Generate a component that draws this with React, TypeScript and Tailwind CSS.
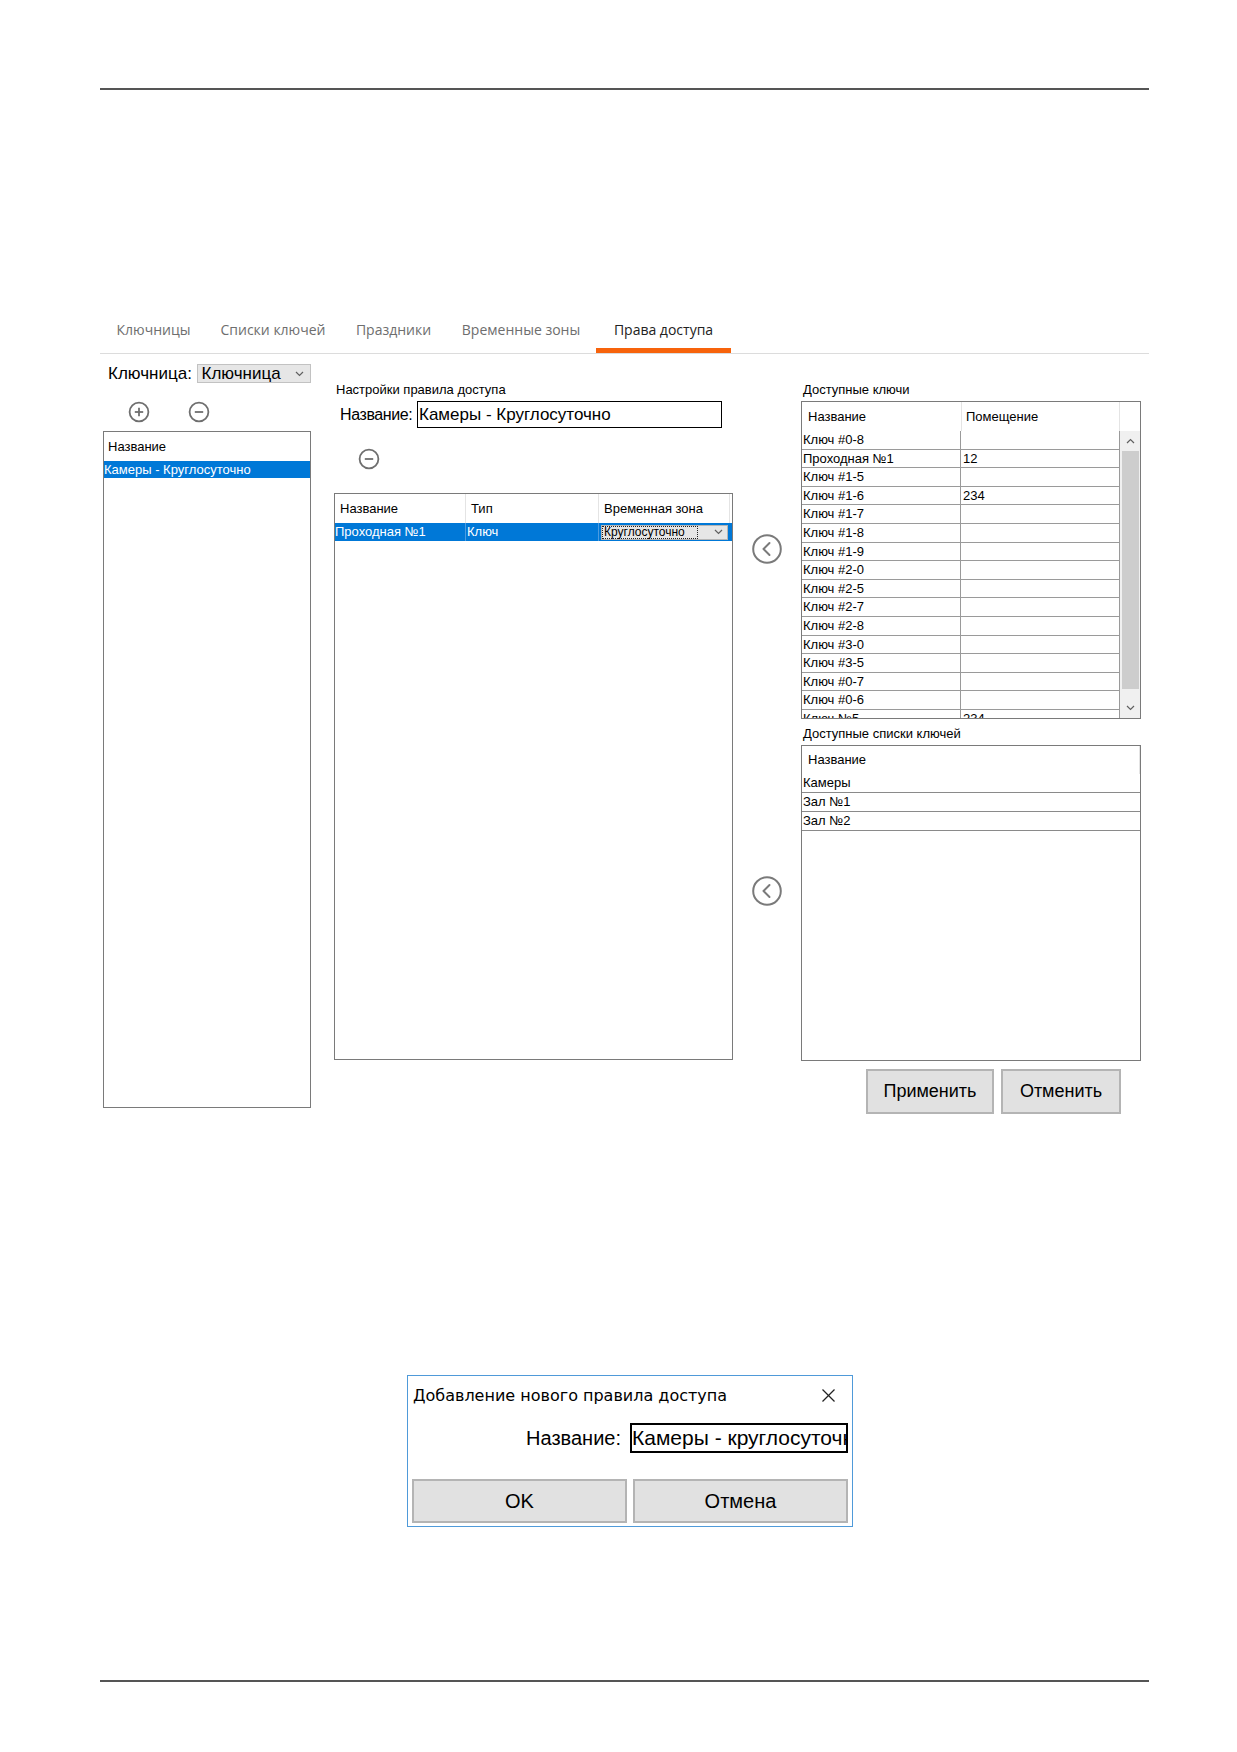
import React from "react";

const tabs = [
	{ label: "Ключницы", w: "w-[103px]" },
	{ label: "Списки ключей", w: "w-[136px]" },
	{ label: "Праздники", w: "w-[105px]" },
	{ label: "Временные зоны", w: "w-[150px]" },
	{ label: "Права доступа", w: "w-[135px]", active: true },
];

const keys: [string, string][] = [
	["Ключ #0-8", ""],
	["Проходная №1", "12"],
	["Ключ #1-5", ""],
	["Ключ #1-6", "234"],
	["Ключ #1-7", ""],
	["Ключ #1-8", ""],
	["Ключ #1-9", ""],
	["Ключ #2-0", ""],
	["Ключ #2-5", ""],
	["Ключ #2-7", ""],
	["Ключ #2-8", ""],
	["Ключ #3-0", ""],
	["Ключ #3-5", ""],
	["Ключ #0-7", ""],
	["Ключ #0-6", ""],
	["Ключ №5", "234"],
];

const keyLists = ["Камеры", "Зал №1", "Зал №2"];

function RoundIcon({ plus }: { plus?: boolean }) {
	return (
		<svg width="22" height="22" viewBox="0 0 22 22" fill="none" stroke="#6f6f6f" strokeWidth="1.8">
			<circle cx="11" cy="11" r="9.4" />
			<line x1="6.8" y1="11" x2="15.2" y2="11" />
			{plus && <line x1="11" y1="6.8" x2="11" y2="15.2" />}
		</svg>
	);
}

function BackButton() {
	return (
		<svg width="30" height="30" viewBox="0 0 30 30" fill="none" stroke="#7a7a7a" strokeWidth="2">
			<circle cx="15" cy="15" r="13.8" />
			<polyline points="17.5,9 11.5,15 17.5,21" strokeLinecap="round" strokeLinejoin="round" />
		</svg>
	);
}

function SmallChevron({ up }: { up?: boolean }) {
	return (
		<svg width="9" height="6" viewBox="0 0 9 6" fill="none" stroke="#606060" strokeWidth="1.2">
			<polyline points={up ? "1,5 4.5,1.5 8,5" : "1,1 4.5,4.5 8,1"} />
		</svg>
	);
}

function KeysTable() {
	return (
		<div className="flex h-[318px] w-[340px] flex-col border border-[#7a7a7a]">
			<div className="flex h-[29px] shrink-0 items-center text-[13px]">
				<div className="flex h-full w-[160px] items-center border-r border-[#e4e4e4] pl-[6px]">Название</div>
				<div className="flex h-full w-[158px] items-center border-r border-[#e4e4e4] pl-[4px]">Помещение</div>
			</div>
			<div className="flex min-h-0 flex-1">
				<div className="min-h-0 w-[318px] overflow-hidden">
					{keys.map(([name, room]) => (
						<div key={name} className="flex h-[18.6px] border-b border-[#9a9a9a] text-[13px] leading-[17px]">
							<div className="w-[159px] shrink-0 border-r border-[#9a9a9a] pl-[1px]">{name}</div>
							<div className="w-[159px] shrink-0 border-r border-[#9a9a9a] pl-[2px]">{room}</div>
						</div>
					))}
				</div>
				<div className="flex w-[20px] flex-col bg-[#f0f0f0]">
					<div className="flex h-[20px] items-center justify-center">
						<SmallChevron up />
					</div>
					<div className="ml-[2px] h-[238px] w-[17px] bg-[#cdcdcd]" />
					<div className="flex flex-1 items-end justify-center pb-[7px]">
						<SmallChevron />
					</div>
				</div>
			</div>
		</div>
	);
}

export default function App() {
	return (
		<div className="relative h-[1752px] w-[1237px] bg-white font-['Liberation_Sans',Arial,sans-serif] text-black">
			<div className="ml-[100px] w-[1049px] pt-[88px]">
				<div className="h-[2px] bg-[#555]" />

				{/* tab strip */}
				<div className="mt-[220px] flex border-b border-[#dcdcdc] pl-[2px]">
					{tabs.map((t) => (
						<div
							key={t.label}
							className={`flex h-[43px] items-center justify-center border-b-[5px] font-['Open_Sans',sans-serif] text-[14px] ${t.w} ${
								t.active ? "border-[#f7630c] text-[#222]" : "border-transparent text-[#6e6e6e]"
							}`}
						>
							{t.label}
						</div>
					))}
				</div>

				<div className="flex items-start">
					{/* key cabinets */}
					<div className="w-[211px]">
						<div className="mt-[10px] flex h-[19px] items-center">
							<div className="w-[97px] pl-[8px] text-[17px] leading-none">Ключница:</div>
							<div className="flex h-[19px] w-[115px] items-center justify-between border border-[#c2c2c2] bg-[#e6e6e6] pl-[4px] pr-[6px] text-[17px] leading-none">
								<span>Ключница</span>
								<SmallChevron />
							</div>
						</div>
						<div className="mt-[18px] flex h-[22px] pl-[28px]">
							<RoundIcon plus />
							<div className="ml-[38px]">
								<RoundIcon />
							</div>
						</div>
						<div className="ml-[3px] mt-[8px] h-[677px] w-[208px] border border-[#7a7a7a] text-[13px]">
							<div className="flex h-[29px] items-center pl-[4px]">Название</div>
							<div className="flex h-[17px] items-center bg-[#0078d7] text-white">Камеры - Круглосуточно</div>
						</div>
					</div>

					{/* rule settings */}
					<div className="ml-[23px] w-[399px]">
						<div className="mt-[28px] pl-[2px] text-[13px] leading-[16px]">Настройки правила доступа</div>
						<div className="mt-[3px] flex h-[27px] items-center">
							<div className="w-[83px] pl-[6px] text-[16px] tracking-[-0.4px]">Название:</div>
							<div className="flex h-[27px] w-[305px] items-center border border-black pl-[1px] text-[17px]">
								Камеры - Круглосуточно
							</div>
						</div>
						<div className="mt-[20px] pl-[24px]">
							<RoundIcon />
						</div>
						<div className="mt-[23px] h-[567px] w-[399px] border border-[#7a7a7a] text-[13px]">
							<div className="flex h-[29px] items-center">
								<div className="flex h-full w-[131px] items-center border-r border-[#e4e4e4] pl-[5px]">Название</div>
								<div className="flex h-full w-[133px] items-center border-r border-[#e4e4e4] pl-[5px]">Тип</div>
								<div className="flex h-full w-[131px] items-center border-r border-[#e4e4e4] pl-[5px]">Временная зона</div>
							</div>
							<div className="flex h-[18px] items-center bg-[#0078d7] text-white">
								<div className="h-full w-[131px] border-r border-[#4b9be0] leading-[18px]">Проходная №1</div>
								<div className="h-full w-[133px] border-r border-[#4b9be0] pl-[1px] leading-[18px]">Ключ</div>
								<div className="flex h-full w-[131px] items-center pl-[2px] pr-[2px]">
									<div className="flex h-[15px] w-full items-center justify-between border border-[#b5b5b5] bg-[#e6e6e6] pr-[4px] text-black">
										<span className="w-[96px] border border-dotted border-[#222] pl-[1px] text-[12px] leading-[11px]">
											Круглосуточно
										</span>
										<SmallChevron />
									</div>
								</div>
							</div>
						</div>
					</div>

					{/* move buttons */}
					<div className="flex w-[68px] flex-col items-center">
						<div className="mt-[180px]">
							<BackButton />
						</div>
						<div className="mt-[312px]">
							<BackButton />
						</div>
					</div>

					{/* available keys and lists */}
					<div className="w-[340px]">
						<div className="mt-[28px] pl-[2px] text-[13px] leading-[16px]">Доступные ключи</div>
						<div className="mt-[3px]">
							<KeysTable />
						</div>
						<div className="mt-[7px] pl-[2px] text-[13px] leading-[16px]">Доступные списки ключей</div>
						<div className="mt-[3px] h-[316px] w-[340px] border border-[#7a7a7a] text-[13px]">
							<div className="flex h-[28px] items-center border-r border-[#e4e4e4] pl-[6px]">Название</div>
							{keyLists.map((l) => (
								<div key={l} className="h-[19px] border-b border-[#8a8a8a] pl-[1px] leading-[18px]">
									{l}
								</div>
							))}
						</div>
						<div className="mt-[8px] flex justify-end gap-[7px] pr-[20px] text-[18px]">
							<button className="h-[45px] w-[128px] border-2 border-[#b4b4b4] bg-[#e1e1e1]">Применить</button>
							<button className="h-[45px] w-[120px] border-2 border-[#b4b4b4] bg-[#e1e1e1]">Отменить</button>
						</div>
					</div>
				</div>

				{/* new rule dialog */}
				<div className="ml-[307px] mt-[261px] flex h-[152px] w-[446px] flex-col border border-[#4f9ad9] bg-white">
					<div className="flex h-[39px] items-center justify-between pl-[5px] pr-[16px]">
						<span className="font-['DejaVu_Sans',sans-serif] text-[16px]">Добавление нового правила доступа</span>
						<svg width="15" height="15" viewBox="0 0 15 15" stroke="#222" strokeWidth="1.3">
							<line x1="1.5" y1="1.5" x2="13.5" y2="13.5" />
							<line x1="13.5" y1="1.5" x2="1.5" y2="13.5" />
						</svg>
					</div>
					<div className="mt-[8px] flex h-[30px] items-center justify-end gap-[9px] pr-[4px]">
						<span className="text-[20px]">Название:</span>
						<div className="flex h-[30px] w-[218px] items-center overflow-hidden whitespace-nowrap border-2 border-black text-[21px]">
							Камеры - круглосуточно
						</div>
					</div>
					<div className="mt-[26px] flex gap-[6px] pl-[4px] text-[20px]">
						<button className="h-[44px] w-[215px] border-2 border-[#b4b4b4] bg-[#e1e1e1]">OK</button>
						<button className="h-[44px] w-[215px] border-2 border-[#b4b4b4] bg-[#e1e1e1]">Отмена</button>
					</div>
				</div>

				<div className="mt-[153px] h-[2px] bg-[#555]" />
			</div>
		</div>
	);
}
